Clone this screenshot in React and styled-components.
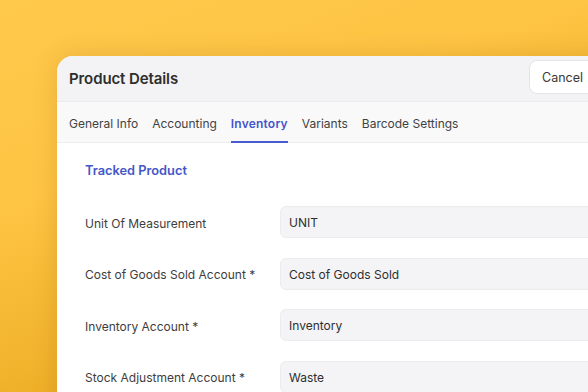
import React from "react";
import styled, { createGlobalStyle } from "styled-components";

const Global = createGlobalStyle`
  html, body { margin: 0; padding: 0; }
  body { font-family: Inter, "Noto Sans", sans-serif; -webkit-font-smoothing: antialiased; }
`;

const Stage = styled.div`
  width: 588px;
  height: 392px;
  overflow: hidden;
  background: linear-gradient(160deg, #ffc94c 0%, #fec443 35%, #f0b12a 65%, #df9c0c 100%);
  padding: 56px 0 0 57px;
  box-sizing: border-box;
`;

const Card = styled.div`
  width: 560px;
  height: 400px;
  flex-shrink: 0;
  background: #ffffff;
  border-radius: 16px 0 0 0;
  box-shadow: 0 0 24px rgba(120, 70, 0, 0.18);
  overflow: hidden;
  display: flex;
  flex-direction: column;
`;

const Header = styled.div`
  height: 46px;
  background: #f3f3f5;
  border-bottom: 1px solid #ececee;
  box-sizing: border-box;
  display: flex;
  align-items: center;
  padding-left: 12px;
`;

const Title = styled.h1`
  margin: 0;
  font-size: 15px;
  font-weight: 600;
  color: #2e2e2e;
  letter-spacing: -0.1px;
`;

const Button = styled.button`
  height: 34px;
  margin-left: auto;
  margin-right: 21px;
  margin-top: -3px;
  padding: 0 12px;
  background: #ffffff;
  border: 1px solid #e4e4e6;
  border-radius: 8px;
  font-family: inherit;
  font-size: 12.5px;
  color: #383838;
  white-space: nowrap;
`;

const Tabs = styled.div`
  height: 41px;
  background: #f9f9fa;
  border-bottom: 1px solid #ededef;
  box-sizing: border-box;
  display: flex;
  align-items: stretch;
  gap: 14px;
  padding-left: 12px;
`;

const Tab = styled.div`
  display: flex;
  align-items: center;
  padding-top: 4px;
  font-size: 12px;
  font-weight: ${(p) => (p.$active ? 600 : 400)};
  letter-spacing: ${(p) => (p.$active ? "0.2px" : "0")};
  color: ${(p) => (p.$active ? "#4556c8" : "#424242")};
  border-bottom: 2px solid ${(p) => (p.$active ? "#4a5bcf" : "transparent")};
  box-sizing: border-box;
  margin-bottom: -1px;
`;

const Content = styled.div`
  padding: 19px 0 0 28px;
  display: flex;
  flex-direction: column;
`;

const Section = styled.div`
  font-size: 12.8px;
  font-weight: 600;
  line-height: 18px;
  color: #4556c8;
  margin-bottom: 26px;
`;

const Form = styled.div`
  display: grid;
  grid-template-columns: 195px 1fr;
  row-gap: 19.5px;
  align-items: center;
`;

const Label = styled.div`
  font-size: 12px;
  color: #3d3d3d;
  padding-top: 2px;
`;

const Field = styled.div`
  height: 32px;
  background: #f4f4f6;
  border: 1px solid #ececee;
  border-radius: 6px;
  box-sizing: border-box;
  display: flex;
  align-items: center;
  padding: 1px 0 0 8px;
  font-size: 12px;
  color: #2e2e2e;
`;

const tabs = ["General Info", "Accounting", "Inventory", "Variants", "Barcode Settings"];
const rows = [
  ["Unit Of Measurement", "UNIT"],
  ["Cost of Goods Sold Account *", "Cost of Goods Sold"],
  ["Inventory Account *", "Inventory"],
  ["Stock Adjustment Account *", "Waste"],
];

export default function App() {
  return (
    <>
      <Global />
      <Stage>
        <Card>
          <Header>
            <Title>Product Details</Title>
            <Button>Cancel</Button>
          </Header>
          <Tabs>
            {tabs.map((t) => (
              <Tab key={t} $active={t === "Inventory"}>{t}</Tab>
            ))}
          </Tabs>
          <Content>
            <Section>Tracked Product</Section>
            <Form>
              {rows.map(([l, v]) => (
                <React.Fragment key={l}>
                  <Label>{l}</Label>
                  <Field>{v}</Field>
                </React.Fragment>
              ))}
            </Form>
          </Content>
        </Card>
      </Stage>
    </>
  );
}
